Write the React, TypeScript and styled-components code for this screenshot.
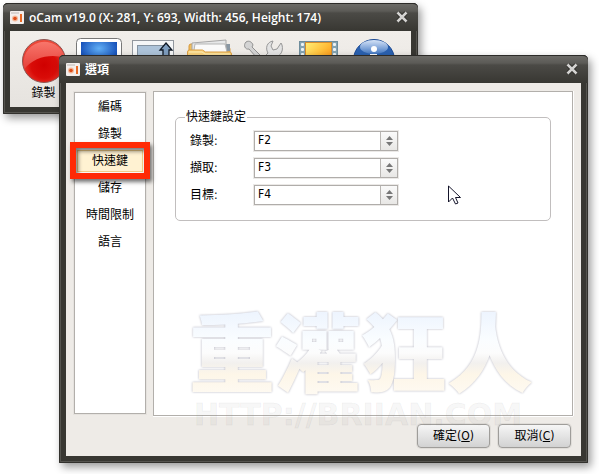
import React from 'react';
import styled, { createGlobalStyle, css } from 'styled-components';

const GlobalStyle = createGlobalStyle`
  *, *::before, *::after { box-sizing: border-box; }
  body {
    margin: 0;
    background: #fff;
    color: #000;
    font-family: "DejaVu Sans Condensed", "Noto Sans CJK TC", sans-serif;
    font-size: 12px;
    line-height: 16px;
  }
  button, select { font: inherit; color: inherit; }
`;

const Desktop = styled.main`
  position: relative;
  display: grid;
  min-height: 100vh;
  overflow: hidden;
`;

const WindowFrame = styled.section<{ $role: 'main' | 'dialog' }>`
  grid-area: 1 / 1;
  display: flex;
  flex-direction: column;
  min-width: 0;
  padding: 0 7px 7px;
  border-radius: 5px 5px 1px 1px;
  background: #383732;
  box-shadow: inset 0 0 0 1px #32312d, inset 0 0 0 2px #55544f, 3px 4px 8px rgba(0, 0, 0, 0.4);
  ${({ $role }) =>
    $role === 'main'
      ? css`margin: 3px 181px auto 3px;`
      : css`margin: 55px 11px 11px 59px;`}
`;

const TitleBar = styled.header`
  display: flex;
  align-items: center;
  gap: 5px;
  height: 28px;
  margin: 0 -7px;
  padding: 0 9px 0 7px;
  border-top: 1px solid #2c2b28;
  border-radius: 5px 5px 0 0;
  background: linear-gradient(#6b6a66 0, #5c5b57 7px, #4b4a46 9px, #383732 100%);
`;

const Title = styled.h1`
  flex: 1;
  margin: 0;
  font-family: "Open Sans", "Noto Sans CJK TC", sans-serif;
  font-size: 12px;
  line-height: 16px;
  font-weight: 600;
  color: #fff;
  white-space: nowrap;
`;

const CloseButton = styled.button`
  display: flex;
  padding: 0 1px 2px 0;
  border: 0;
  background: none;
`;

const MainClient = styled.div`
  display: grid;
  grid-template-columns: repeat(7, 55px);
  height: 76px;
  padding: 6px 6px 0;
  overflow: hidden;
  background: linear-gradient(#f1eeea, #e6e3df);
`;

const Tool = styled.button`
  display: flex;
  flex-direction: column;
  align-items: center;
  padding: 0;
  border: 0;
  background: none;
`;

const DialogClient = styled.div`
  flex: 1;
  display: flex;
  flex-direction: column;
  padding: 8px 8px 0;
  background: #eeebe7;
`;

const Body = styled.div`
  flex: 1;
  display: flex;
  gap: 7px;
`;

const Nav = styled.nav`
  display: flex;
  flex-direction: column;
  gap: 5px;
  width: 72px;
  margin: 1px 0 2px;
  padding: 3px 2px;
  border: 1px solid #b2afab;
  background: #fff;
  box-shadow: 0 0 0 1px #e5e2de;
`;

const NavItem = styled.button<{ $active: boolean }>`
  position: relative;
  height: 22px;
  padding: 0;
  border: 1px solid ${({ $active }) => ($active ? '#f4cf87' : 'transparent')};
  background: ${({ $active }) => ($active ? '#fff2d2' : 'transparent')};
  white-space: nowrap;
`;

const Highlight = styled.span`
  position: absolute;
  inset: -9px -8px -8px;
  border: 6px solid #ff2a05;
  box-shadow: 2px 3px 4px rgba(0, 0, 0, 0.55), inset 2px 3px 4px rgba(0, 0, 0, 0.55);
  pointer-events: none;
`;

const Panel = styled.div`
  flex: 1;
  min-width: 0;
  padding: 17px 21px 0;
  border: 1px solid #b2afab;
  background: #fff;
  box-shadow: 0 1px 0 #fff, 1px 0 0 #fff;
`;

const Group = styled.fieldset`
  min-width: 0;
  margin: 0;
  padding: 0;
  border: 1px solid #c1bebe;
  border-radius: 5px;
`;

const Legend = styled.legend`
  margin-left: 9px;
  padding: 0 1px;
`;

const Rows = styled.div`
  display: grid;
  gap: 7px;
  padding: 6px 14px 15px;
`;

const Row = styled.div`
  display: grid;
  grid-template-columns: 64px 144px;
  align-items: center;
`;

const SelectBox = styled.div`
  display: grid;
  grid-template-columns: 1fr 17px;
  height: 20px;
  border: 1px solid #b0adaa;
  background: #fff;
  box-shadow: 0 0 0 1px #ebe9e7;
`;

const Select = styled.select`
  grid-area: 1 / 1 / 2 / 3;
  appearance: none;
  width: 100%;
  padding: 0 20px 2px 3px;
  border: 0;
  background: transparent;
  outline: 0;
`;

const Arrows = styled.span`
  grid-area: 1 / 2;
  display: grid;
  place-items: center;
  border-left: 1px solid #b9b6b3;
  background: linear-gradient(#fafafa, #e8e7e5);
  pointer-events: none;
`;

const Footer = styled.footer`
  display: flex;
  justify-content: flex-end;
  gap: 8px;
  padding: 8px 2px;
`;

const PushButton = styled.button`
  width: 73px;
  height: 24px;
  padding: 0;
  border: 1px solid #9f9d9a;
  border-radius: 4px;
  background: linear-gradient(#f6f6f6, #e4e4e4 50%, #d2d2d2);
  box-shadow: 0 0 0 1px #e0ddd9;
`;

const Watermark = styled.div`
  position: absolute;
  left: 189px;
  bottom: 43px;
  pointer-events: none;
  white-space: nowrap;
`;

const WatermarkName = styled.svg`
  display: block;
  overflow: visible;
  font-family: "Noto Sans CJK TC", sans-serif;
  font-weight: 900;
  font-size: 86px;
  filter: drop-shadow(0 0 1px #b4b4c0);
`;

const WatermarkUrl = styled.div`
  padding-left: 5px;
  font-family: "DejaVu Sans", sans-serif;
  font-weight: 700;
  font-size: 30px;
  line-height: 32px;
  color: rgba(130, 130, 130, 0.08);
  -webkit-text-stroke: 1px rgba(130, 130, 130, 0.08);
`;

const Pointer = styled.svg`
  position: absolute;
  left: 448px;
  top: 185px;
`;

const AppIcon = () => (
  <svg width="14" height="13" viewBox="0 0 14 13" aria-hidden="true">
    <rect width="14" height="13" rx="1" fill="#f3eeec" />
    <rect x="1" y="1" width="8" height="2" fill="#d9d3d0" />
    <circle cx="5" cy="7.500" r="3" fill="#f6b99b" />
    <circle cx="5" cy="7.500" r="1.800" fill="#dd4d19" />
    <rect x="10" y="3" width="2" height="8" fill="#ea6a25" />
  </svg>
);

const CloseIcon = () => (
  <svg width="12" height="12" viewBox="0 0 12 12" aria-hidden="true">
    <path d="M2 2l8 8M10 2l-8 8" stroke="#23221f" strokeWidth="4" />
    <path d="M1.500 1.500l9 9M10.500 1.500l-9 9" stroke="#d4d3d1" strokeWidth="2.600" />
  </svg>
);

const RecordIcon = () => (
  <svg width="48" height="48" viewBox="0 0 48 48" aria-hidden="true">
    <defs>
      <radialGradient id="rec" cx="50%" cy="60%" r="60%">
        <stop offset="0" stopColor="#d00000" />
        <stop offset=".5" stopColor="#d90c08" />
        <stop offset="1" stopColor="#f0503f" />
      </radialGradient>
      <linearGradient id="recGloss" x1="0" y1="0" x2="0" y2="1">
        <stop offset="0" stopColor="#f8766b" />
        <stop offset="1" stopColor="#e5403a" />
      </linearGradient>
    </defs>
    <circle cx="24" cy="24" r="21.500" fill="url(#rec)" stroke="#8d5552" />
    <path d="M4.500 32A21 21 0 1 1 45 21C32 16 13 20 4.500 32Z" fill="url(#recGloss)" />
  </svg>
);

const MonitorIcon = () => (
  <svg width="48" height="48" viewBox="0 0 48 48" aria-hidden="true">
    <defs>
      <radialGradient id="scr" cx="50%" cy="25%" r="60%">
        <stop offset="0" stopColor="#60aef5" />
        <stop offset="1" stopColor="#0d45b2" />
      </radialGradient>
    </defs>
    <rect x="1.500" y="1.500" width="45" height="34" rx="4" fill="#fff" stroke="#777" />
    <rect x="6" y="5" width="36" height="26" fill="url(#scr)" />
    <path d="M18 36h12l3 8H15z" fill="#ccc" />
  </svg>
);

const CaptureIcon = () => (
  <svg width="48" height="48" viewBox="0 0 48 48" aria-hidden="true">
    <rect x="2.500" y="3.500" width="41" height="36" fill="#f5f6f7" stroke="#92979e" />
    <rect x="7.500" y="8.500" width="31" height="26" fill="#adc3d9" stroke="#8593a1" />
    <path d="M36 6l6 7h-3v18h-6V13h-3z" fill="#7e9dbe" stroke="#111a26" strokeWidth="1.300" />
  </svg>
);

const FolderIcon = () => (
  <svg width="48" height="48" viewBox="0 0 48 48" aria-hidden="true">
    <path d="M4 9q0-2 2-2h9l2 3h26q2 0 2 2v30H4z" fill="#efbf61" stroke="#d8983b" />
    <path d="M40 7h5v7l-8 1z" fill="#8997a3" />
    <path d="M7 6l34-3v15H7z" fill="#e6e7e8" stroke="#a6a6a6" />
    <path d="M10 7h30l3 12H8z" fill="#fafafa" stroke="#b5b5b5" />
    <path d="M2.500 15q0-2 2-2h13l3 2h24q2 0 2 2v25h-44z" fill="#fbd47f" stroke="#dda044" />
    <path d="M4 15h13l3 2h25" fill="none" stroke="#fff0b8" />
  </svg>
);

const ToolsIcon = () => (
  <svg width="48" height="48" viewBox="0 0 48 48" aria-hidden="true">
    <path d="M6 5c3-2 6 0 7 3l-1 2 24 24-4 4L9 12C5 13 3 8 6 5z" fill="#d4d4d4" stroke="#929292" />
    <path d="M33 4c-6 1-8 7-5 12L10 35l5 5 18-20c6 1 11-5 9-12l-1-2-4 6-4 1-2-4z" fill="#e3e3e3" stroke="#979797" />
  </svg>
);

const FilmIcon = () => (
  <svg width="48" height="48" viewBox="0 0 48 48" aria-hidden="true">
    <defs>
      <linearGradient id="film" x1="0" y1="0" x2=".8" y2="1">
        <stop offset="0" stopColor="#ffef77" />
        <stop offset=".45" stopColor="#ffbf3a" />
        <stop offset="1" stopColor="#f27500" />
      </linearGradient>
    </defs>
    <rect x="4.500" y="4.500" width="38" height="36" fill="#84a3b2" stroke="#6f8d9c" />
    <rect x="10.500" y="5.500" width="26" height="34" fill="url(#film)" stroke="#d58b2e" />
    {[6, 11, 16, 21, 26].map((y) => (
      <g key={y} fill="#eef3f4">
        <rect x="6" y={y} width="3" height="3" rx="1" />
        <rect x="38" y={y} width="3" height="3" rx="1" />
      </g>
    ))}
  </svg>
);

const InfoIcon = () => (
  <svg width="48" height="48" viewBox="0 0 48 48" aria-hidden="true">
    <defs>
      <linearGradient id="info" x1="0" y1="0" x2="0" y2="1">
        <stop offset="0" stopColor="#d5e3f7" />
        <stop offset="1" stopColor="#4479c3" />
      </linearGradient>
    </defs>
    <circle cx="24" cy="23" r="20.500" fill="#2a61b0" stroke="#1c4a94" />
    <ellipse cx="24" cy="10" rx="14" ry="7" fill="url(#info)" />
    <circle cx="24" cy="12" r="3" fill="#fff" />
    <path d="M20 17h7v15h3v3H18v-3h3V20h-1z" fill="#fff" />
  </svg>
);

const TOOLS = [
  { name: '錄製', Icon: RecordIcon, caption: true },
  { name: 'Screen', Icon: MonitorIcon },
  { name: 'Capture', Icon: CaptureIcon },
  { name: 'Open', Icon: FolderIcon },
  { name: 'Settings', Icon: ToolsIcon },
  { name: 'Video', Icon: FilmIcon },
  { name: 'About', Icon: InfoIcon },
];

const SECTIONS = ['編碼', '錄製', '快速鍵', '儲存', '時間限制', '語言'];

const HOTKEYS = [
  { id: 'record', label: '錄製:', value: 'F2' },
  { id: 'capture', label: '擷取:', value: 'F3' },
  { id: 'target', label: '目標:', value: 'F4' },
];

const WindowTitle = ({ children }: { children: React.ReactNode }) => (
  <TitleBar>
    <AppIcon />
    <Title>{children}</Title>
    <CloseButton type="button" aria-label="Close">
      <CloseIcon />
    </CloseButton>
  </TitleBar>
);

export default function App() {
  const [section, setSection] = React.useState('快速鍵');

  return (
    <>
      <GlobalStyle />
      <Desktop>
        <WindowFrame $role="main">
          <WindowTitle>oCam v19.0 (X: 281, Y: 693, Width: 456, Height: 174)</WindowTitle>
          <MainClient>
            {TOOLS.map(({ name, Icon, caption }) => (
              <Tool key={name} type="button" aria-label={name}>
                <Icon />
                {caption && <span>{name}</span>}
              </Tool>
            ))}
          </MainClient>
        </WindowFrame>

        <WindowFrame $role="dialog" role="dialog">
          <WindowTitle>選項</WindowTitle>
          <DialogClient>
            <Body>
              <Nav>
                {SECTIONS.map((name) => (
                  <NavItem
                    key={name}
                    type="button"
                    $active={name === section}
                    onClick={() => setSection(name)}
                  >
                    {name}
                    {name === section && <Highlight />}
                  </NavItem>
                ))}
              </Nav>
              <Panel>
                <Group>
                  <Legend>快速鍵設定</Legend>
                  <Rows>
                    {HOTKEYS.map(({ id, label, value }) => (
                      <Row key={id}>
                        <label htmlFor={id}>{label}</label>
                        <SelectBox>
                          <Arrows>
                            <svg width="7" height="10" viewBox="0 0 7 10" aria-hidden="true">
                              <path d="M0 4l3.500-4L7 4zM0 6h7l-3.500 4z" fill="#777" />
                            </svg>
                          </Arrows>
                          <Select id={id} defaultValue={value}>
                            {HOTKEYS.map((key) => (
                              <option key={key.value}>{key.value}</option>
                            ))}
                          </Select>
                        </SelectBox>
                      </Row>
                    ))}
                  </Rows>
                </Group>
              </Panel>
            </Body>
            <Footer>
              <PushButton type="button">確定(<u>O</u>)</PushButton>
              <PushButton type="button">取消(<u>C</u>)</PushButton>
            </Footer>
          </DialogClient>
        </WindowFrame>

        <Watermark>
          <WatermarkName width="344" height="92" viewBox="0 0 344 92">
            <defs>
              <linearGradient id="sky" gradientUnits="userSpaceOnUse" x1="0" y1="4" x2="0" y2="88">
                <stop offset="0" stopColor="#edf4fe" />
                <stop offset=".35" stopColor="#fafdff" />
                <stop offset=".5" stopColor="#fcfcfc" />
                <stop offset=".62" stopColor="#f2f0ee" />
                <stop offset=".75" stopColor="#fdf6e8" />
                <stop offset="1" stopColor="#fefaf2" />
              </linearGradient>
            </defs>
            <text x="0" y="79" fill="url(#sky)">重灌狂人</text>
          </WatermarkName>
          <WatermarkUrl>HTTP://BRIIAN.COM</WatermarkUrl>
        </Watermark>
        <Pointer width="13" height="20" viewBox="0 0 13 20" aria-hidden="true">
          <path d="M.5 1v16l4-4 3 6 2.500-1-2.500-5.500h5z" fill="#fff" stroke="#15152b" />
        </Pointer>
      </Desktop>
    </>
  );
}
